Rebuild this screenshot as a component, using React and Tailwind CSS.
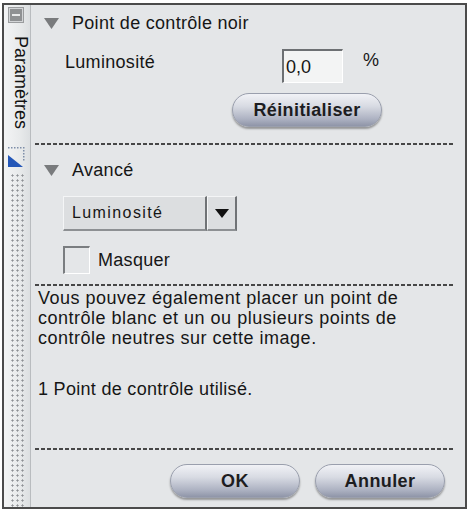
import React from 'react';

const Caret = () => (
  <svg width="17" height="13" viewBox="0 0 17 13" className="shrink-0">
    <path d="M1 1 L16 1 L8.5 12 Z" fill="#797b7d" />
  </svg>
);

const Dashes = ({ className = '' }) => (
  <div
    className={
      'h-[2px] bg-[repeating-linear-gradient(90deg,#474747_0_4px,transparent_4px_6px)] ' +
      className
    }
  />
);

const PillButton = ({ label, className = '' }) => (
  <button
    className={
      'h-[34px] rounded-full border border-[#9a9fad] bg-[linear-gradient(#f1f2f6,#d8dbe3_38%,#adb2c2_78%,#8f95a8)] shadow-[0_2px_2px_rgba(0,0,0,0.35)] font-bold text-[18px] tracking-[0.4px] text-[#1d1d1f] ' +
      className
    }
  >
    {label}
  </button>
);

const Sidebar = () => (
  <div className="w-[27px] shrink-0 flex flex-col bg-[linear-gradient(90deg,#f3f4f5,#e8eaeb_60%,#dcdfe1)] border-r border-[#b9bcbf]">
    {/* collapse button */}
    <div className="mt-[3px] ml-[5px] w-[14px] h-[14px] border border-[#d3d5d7] bg-[#8f9193] flex items-center justify-center shadow-[0_0_0_1px_#9a9c9e]">
      <div className="w-[8px] h-[2px] bg-[#e9eaeb]" />
    </div>
    <div className="mt-[14px] ml-[7px] [writing-mode:vertical-rl] text-[18px] leading-[18px] text-[#111]">
      Paramètres
    </div>
    {/* resize grip */}
    <svg width="17" height="21" viewBox="0 0 17 21" className="mt-[18px] ml-[4px]">
      {[0, 3, 6, 9, 12, 15].map((x) => (
        <rect key={'t' + x} x={x} y="0" width="1.5" height="1.5" fill="#7e8ea8" />
      ))}
      {[3, 6, 9, 12].map((y) => (
        <rect key={'r' + y} x="15" y={y} width="1.5" height="1.5" fill="#7e8ea8" />
      ))}
      <path d="M0 8 L15 20 L0 20 Z" fill="#2457b8" />
    </svg>
    <div className="flex-1 mt-[5px] mx-[6px] bg-[radial-gradient(circle,#8d9094_0.9px,transparent_1.2px)] bg-[length:5px_5px]" />
  </div>
);

export default function App() {
  return (
    <div className="w-[470px] h-[512px] bg-white pt-[3px] pl-[2px]">
      <div className="w-[465px] h-[506px] border-2 border-[#4b4b4b] flex font-['Liberation_Sans',Arial,sans-serif] text-[18px] text-[#161616]">
        <Sidebar />

        <div className="flex-1 flex flex-col bg-[#e4e6e8] pb-[9px]">
          {/* Point de contrôle noir */}
          <div className="h-[36px] flex items-center gap-[12px] pl-[12px]">
            <Caret />
            <span className="tracking-[0.3px]">Point de contrôle noir</span>
          </div>

          <div className="mt-[8px] h-[34px] flex items-start pl-[34px]">
            <span className="w-[217px] mt-[3px] leading-[20px] tracking-[0.3px]">Luminosité</span>
            <div className="w-[61px] h-[34px] bg-[#f3f4f4] border-t-2 border-l-2 border-[#6d7073] border-b border-r border-b-white border-r-white pl-[2px] pt-[6px] leading-[20px]">
              0,0
            </div>
            <span className="ml-[20px] mt-[1px] leading-[20px]">%</span>
          </div>

          <div className="mt-[10px] pl-[201px]">
            <PillButton label="Réinitialiser" className="w-[150px]" />
          </div>

          <Dashes className="mt-[16px] ml-[4px] mr-[10px]" />

          {/* Avancé */}
          <div className="mt-[7px] h-[36px] flex items-center gap-[12px] pl-[12px]">
            <Caret />
            <span className="tracking-[0.3px]">Avancé</span>
          </div>

          <div className="mt-[8px] pl-[32px] flex h-[35px]">
            <div className="w-[144px] bg-[#dcdee0] border-t border-l border-[#f4f5f6] border-b-2 border-r-2 border-b-[#8d9093] border-r-[#707376] flex items-center pl-[8px] text-[16px] tracking-[1.4px]">
              Luminosité
            </div>
            <div className="w-[30px] bg-[#dcdee0] border-t border-l border-[#f4f5f6] border-b-2 border-r-2 border-b-[#8d9093] border-r-[#707376] flex items-center justify-center">
              <svg width="14" height="9" viewBox="0 0 14 9">
                <path d="M0 0 L14 0 L7 9 Z" fill="#111" />
              </svg>
            </div>
          </div>

          <label className="mt-[15px] pl-[32px] flex items-center gap-[8px]">
            <span className="w-[27px] h-[28px] border-t-2 border-l-2 border-[#7a7d80] border-b border-r border-b-white border-r-white bg-[#e4e6e8]" />
            <span className="tracking-[0.3px]">Masquer</span>
          </label>

          <Dashes className="mt-[10px] ml-[4px] mr-[10px]" />

          <p className="mt-[2px] pl-[7px] pr-[10px] leading-[20px] tracking-[0.5px]">
            Vous pouvez également placer un point de contrôle blanc et un ou plusieurs points de
            contrôle neutres sur cette image.
          </p>
          <p className="mt-[31px] pl-[7px] leading-[20px] tracking-[0.3px]">
            1 Point de contrôle utilisé.
          </p>

          <Dashes className="mt-auto ml-[4px] mr-[10px]" />

          <div className="mt-[14px] flex gap-[15px] pl-[139px]">
            <PillButton label="OK" className="w-[130px]" />
            <PillButton label="Annuler" className="w-[130px]" />
          </div>
        </div>
      </div>
    </div>
  );
}
